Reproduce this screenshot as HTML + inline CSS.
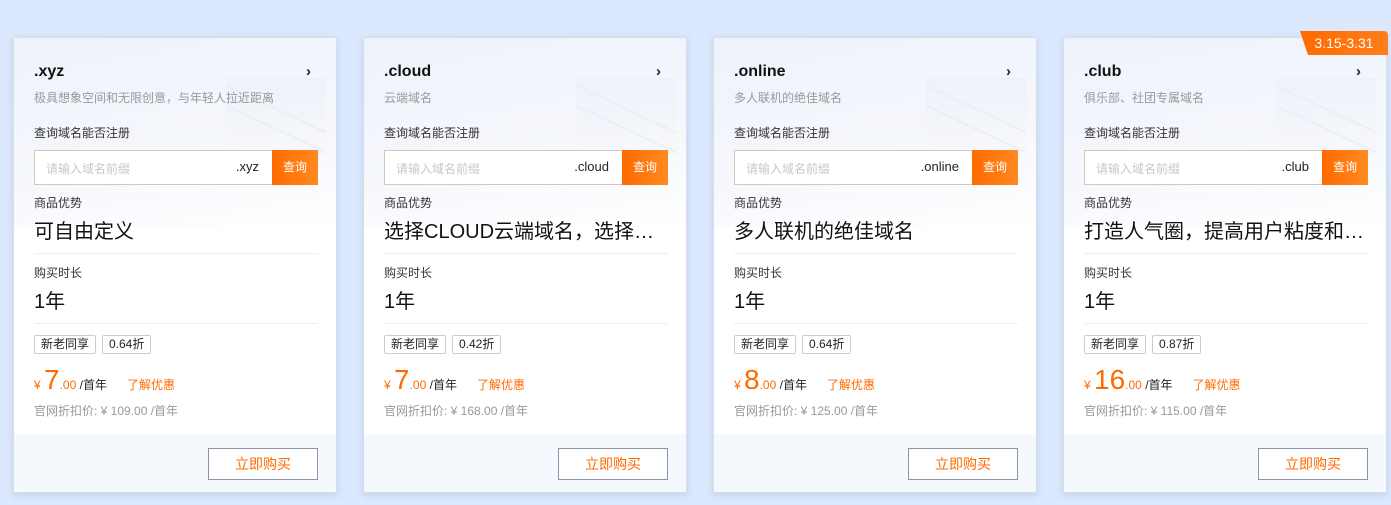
<!DOCTYPE html>
<html><head><meta charset="utf-8"><style>
*{margin:0;padding:0;box-sizing:border-box}
body{width:1391px;height:505px;background:#dbe8fd;font-family:"Liberation Sans","Noto Sans CJK SC",sans-serif;position:relative;overflow:hidden}
.card{position:absolute;top:37px;width:324px;height:456px;background:#fff;border:1px solid #d6deea;box-shadow:0 2px 6px rgba(120,140,180,.25);overflow:hidden}
.bg{position:absolute;left:0;top:0;width:100%;height:190px;background:linear-gradient(170deg,#eef2fb 0%,#f5f7fc 55%,#fff 100%)}
.cube{position:absolute;left:212px;top:40px;width:100px;height:80px;background:linear-gradient(180deg,rgba(235,238,246,.6),rgba(245,247,252,.2));opacity:.8}
.cube i{position:absolute;left:0;width:100px;height:2px;background:#e9ecf3;transform:skewY(25deg)}
.a{position:absolute;left:20px;white-space:nowrap}
.t{top:25px;font-size:16px;font-weight:bold;color:#111}
.arr{position:absolute;left:292px;top:25px;font-size:15px;font-weight:bold;color:#222}
.s{top:51px;font-size:12px;color:#999}
.l{font-size:12px;color:#333}
.inp{position:absolute;left:20px;top:112px;width:284px;height:35px;border:1px solid #d8c6b8;background:#fff}
.inp .ph{position:absolute;left:11px;top:9px;font-size:12px;color:#c8c8c8}
.inp .sf{position:absolute;right:58px;top:8px;font-size:13px;color:#222}
.inp .b{position:absolute;right:-1px;top:-1px;width:46px;height:35px;background:linear-gradient(90deg,#ff6a00,#ff8a20);color:#fff;font-size:12px;text-align:center;line-height:35px}
.big{font-size:20px;color:#111}
.hr{position:absolute;left:20px;width:284px;height:1px;background:#eceef2}
.tag{position:absolute;top:297px;height:19px;border:1px solid #ccc;border-radius:2px;font-size:12px;line-height:17px;padding:0 6px;color:#222}
.pr{top:326px;color:#ff6a00;font-size:12px}
.pr b{font-size:28px;font-weight:normal}
.pr .u{color:#222}
.op{top:364px;font-size:12px;color:#999}
.ft{position:absolute;left:0;top:396px;width:100%;height:60px;background:#f5f8fd}
.btn{position:absolute;left:194px;top:410px;width:110px;height:32px;border:1px solid #8a93a8;color:#ff6a00;font-size:14px;text-align:center;line-height:30px;background:#fff}
.badge{position:absolute;left:1300px;top:31px;width:88px;height:24px;background:linear-gradient(90deg,#ff6a00,#ff7e1a);color:#fff;font-size:14px;line-height:24px;text-align:center;border-radius:0 4px 0 10px;clip-path:polygon(0 0,100% 0,100% 100%,8px 100%)}
</style></head><body>

<div class="card" style="left:13px">
<div class="bg"></div><div class="cube"><i style="top:30px"></i><i style="top:50px"></i></div>
<div class="a t">.xyz</div><div class="arr">›</div>
<div class="a s">极具想象空间和无限创意，与年轻人拉近距离</div>
<div class="a l" style="top:86px">查询域名能否注册</div>
<div class="inp"><span class="ph">请输入域名前缀</span><span class="sf">.xyz</span><span class="b">查询</span></div>
<div class="a l" style="top:156px">商品优势</div>
<div class="a big" style="top:177px">可自由定义</div>
<div class="hr" style="top:215px"></div>
<div class="a l" style="top:226px">购买时长</div>
<div class="a big" style="top:247px">1年</div>
<div class="hr" style="top:285px"></div>
<div class="tag" style="left:20px">新老同享</div><div class="tag" style="left:88px">0.64折</div>
<div class="a pr">¥ <b>7</b>.00 <span class="u">/首年</span>&nbsp;&nbsp;&nbsp;&nbsp;&nbsp;&nbsp;了解优惠</div>
<div class="a op">官网折扣价: ¥ 109.00 /首年</div>
<div class="ft"></div><div class="btn">立即购买</div>
</div>

<div class="card" style="left:363px">
<div class="bg"></div><div class="cube"><i style="top:30px"></i><i style="top:50px"></i></div>
<div class="a t">.cloud</div><div class="arr">›</div>
<div class="a s">云端域名</div>
<div class="a l" style="top:86px">查询域名能否注册</div>
<div class="inp"><span class="ph">请输入域名前缀</span><span class="sf">.cloud</span><span class="b">查询</span></div>
<div class="a l" style="top:156px">商品优势</div>
<div class="a big" style="top:177px">选择CLOUD云端域名，选择…</div>
<div class="hr" style="top:215px"></div>
<div class="a l" style="top:226px">购买时长</div>
<div class="a big" style="top:247px">1年</div>
<div class="hr" style="top:285px"></div>
<div class="tag" style="left:20px">新老同享</div><div class="tag" style="left:88px">0.42折</div>
<div class="a pr">¥ <b>7</b>.00 <span class="u">/首年</span>&nbsp;&nbsp;&nbsp;&nbsp;&nbsp;&nbsp;了解优惠</div>
<div class="a op">官网折扣价: ¥ 168.00 /首年</div>
<div class="ft"></div><div class="btn">立即购买</div>
</div>

<div class="card" style="left:713px">
<div class="bg"></div><div class="cube"><i style="top:30px"></i><i style="top:50px"></i></div>
<div class="a t">.online</div><div class="arr">›</div>
<div class="a s">多人联机的绝佳域名</div>
<div class="a l" style="top:86px">查询域名能否注册</div>
<div class="inp"><span class="ph">请输入域名前缀</span><span class="sf">.online</span><span class="b">查询</span></div>
<div class="a l" style="top:156px">商品优势</div>
<div class="a big" style="top:177px">多人联机的绝佳域名</div>
<div class="hr" style="top:215px"></div>
<div class="a l" style="top:226px">购买时长</div>
<div class="a big" style="top:247px">1年</div>
<div class="hr" style="top:285px"></div>
<div class="tag" style="left:20px">新老同享</div><div class="tag" style="left:88px">0.64折</div>
<div class="a pr">¥ <b>8</b>.00 <span class="u">/首年</span>&nbsp;&nbsp;&nbsp;&nbsp;&nbsp;&nbsp;了解优惠</div>
<div class="a op">官网折扣价: ¥ 125.00 /首年</div>
<div class="ft"></div><div class="btn">立即购买</div>
</div>

<div class="card" style="left:1063px">
<div class="bg"></div><div class="cube"><i style="top:30px"></i><i style="top:50px"></i></div>
<div class="a t">.club</div><div class="arr">›</div>
<div class="a s">俱乐部、社团专属域名</div>
<div class="a l" style="top:86px">查询域名能否注册</div>
<div class="inp"><span class="ph">请输入域名前缀</span><span class="sf">.club</span><span class="b">查询</span></div>
<div class="a l" style="top:156px">商品优势</div>
<div class="a big" style="top:177px">打造人气圈，提高用户粘度和…</div>
<div class="hr" style="top:215px"></div>
<div class="a l" style="top:226px">购买时长</div>
<div class="a big" style="top:247px">1年</div>
<div class="hr" style="top:285px"></div>
<div class="tag" style="left:20px">新老同享</div><div class="tag" style="left:88px">0.87折</div>
<div class="a pr">¥ <b>16</b>.00 <span class="u">/首年</span>&nbsp;&nbsp;&nbsp;&nbsp;&nbsp;&nbsp;了解优惠</div>
<div class="a op">官网折扣价: ¥ 115.00 /首年</div>
<div class="ft"></div><div class="btn">立即购买</div>
</div>

<div class="badge">3.15-3.31</div>
</body></html>
